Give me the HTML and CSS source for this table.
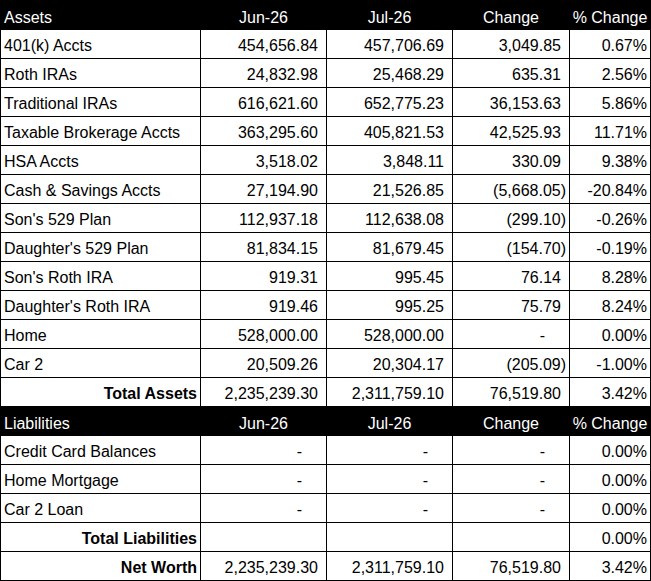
FILE: index.html
```html
<!DOCTYPE html>
<html>
<head>
<meta charset="utf-8">
<link rel="stylesheet" href="styles.css">
</head>
<body>
<div class="sheet">
  <div class="c h hl">Assets</div><div class="c h">Jun-26</div><div class="c h">Jul-26</div><div class="c h">Change</div><div class="c h">% Change</div>

  <div class="c l">401(k) Accts</div><div class="c n">454,656.84</div><div class="c n">457,706.69</div><div class="c n">3,049.85</div><div class="c p">0.67%</div>
  <div class="c l">Roth IRAs</div><div class="c n">24,832.98</div><div class="c n">25,468.29</div><div class="c n">635.31</div><div class="c p">2.56%</div>
  <div class="c l">Traditional IRAs</div><div class="c n">616,621.60</div><div class="c n">652,775.23</div><div class="c n">36,153.63</div><div class="c p">5.86%</div>
  <div class="c l">Taxable Brokerage Accts</div><div class="c n">363,295.60</div><div class="c n">405,821.53</div><div class="c n">42,525.93</div><div class="c p">11.71%</div>
  <div class="c l">HSA Accts</div><div class="c n">3,518.02</div><div class="c n">3,848.11</div><div class="c n">330.09</div><div class="c p">9.38%</div>
  <div class="c l">Cash &amp; Savings Accts</div><div class="c n">27,194.90</div><div class="c n">21,526.85</div><div class="c n neg">(5,668.05)</div><div class="c p">-20.84%</div>
  <div class="c l">Son's 529 Plan</div><div class="c n">112,937.18</div><div class="c n">112,638.08</div><div class="c n neg">(299.10)</div><div class="c p">-0.26%</div>
  <div class="c l">Daughter's 529 Plan</div><div class="c n">81,834.15</div><div class="c n">81,679.45</div><div class="c n neg">(154.70)</div><div class="c p">-0.19%</div>
  <div class="c l">Son's Roth IRA</div><div class="c n">919.31</div><div class="c n">995.45</div><div class="c n">76.14</div><div class="c p">8.28%</div>
  <div class="c l">Daughter's Roth IRA</div><div class="c n">919.46</div><div class="c n">995.25</div><div class="c n">75.79</div><div class="c p">8.24%</div>
  <div class="c l">Home</div><div class="c n">528,000.00</div><div class="c n">528,000.00</div><div class="c n z">-</div><div class="c p">0.00%</div>
  <div class="c l">Car 2</div><div class="c n">20,509.26</div><div class="c n">20,304.17</div><div class="c n neg">(205.09)</div><div class="c p">-1.00%</div>
  <div class="c t">Total Assets</div><div class="c n">2,235,239.30</div><div class="c n">2,311,759.10</div><div class="c n">76,519.80</div><div class="c p">3.42%</div>

  <div class="c h hl">Liabilities</div><div class="c h">Jun-26</div><div class="c h">Jul-26</div><div class="c h">Change</div><div class="c h">% Change</div>

  <div class="c l">Credit Card Balances</div><div class="c n z">-</div><div class="c n z">-</div><div class="c n z">-</div><div class="c p">0.00%</div>
  <div class="c l">Home Mortgage</div><div class="c n z">-</div><div class="c n z">-</div><div class="c n z">-</div><div class="c p">0.00%</div>
  <div class="c l">Car 2 Loan</div><div class="c n z">-</div><div class="c n z">-</div><div class="c n z">-</div><div class="c p">0.00%</div>
  <div class="c t">Total Liabilities</div><div class="c n"></div><div class="c n"></div><div class="c n"></div><div class="c p">0.00%</div>
  <div class="c t">Net Worth</div><div class="c n">2,235,239.30</div><div class="c n">2,311,759.10</div><div class="c n">76,519.80</div><div class="c p">3.42%</div>
</div>
</body>
</html>
```

FILE: styles.css
```css
html, body {
  margin: 0;
  padding: 0;
  background: #ffffff;
}

.sheet {
  display: grid;
  grid-template-columns: 199px 125px 125px 116px 80px;
  grid-auto-rows: 28px;
  gap: 1px;
  padding: 1px;
  width: 651px;
  box-sizing: border-box;
  background: #000000;
  font-family: "Liberation Sans", Arial, sans-serif;
  font-size: 16px;
  line-height: 18px;
  color: #000000;
}

.c {
  background: #ffffff;
  display: flex;
  align-items: flex-end;
  padding: 0 3px 3px 3px;
  white-space: nowrap;
  overflow: hidden;
}

.h {
  background: #000000;
  color: #ffffff;
  justify-content: center;
  padding-bottom: 2px;
}

.h.hl {
  justify-content: flex-start;
}

.l {
  justify-content: flex-start;
}

.t {
  justify-content: flex-end;
  font-weight: bold;
}

.n {
  justify-content: flex-end;
  padding-right: 8px;
}

.n.neg {
  padding-right: 3px;
}

.n.z {
  padding-right: 24px;
}

.p {
  justify-content: flex-end;
  padding-right: 3px;
}
```
